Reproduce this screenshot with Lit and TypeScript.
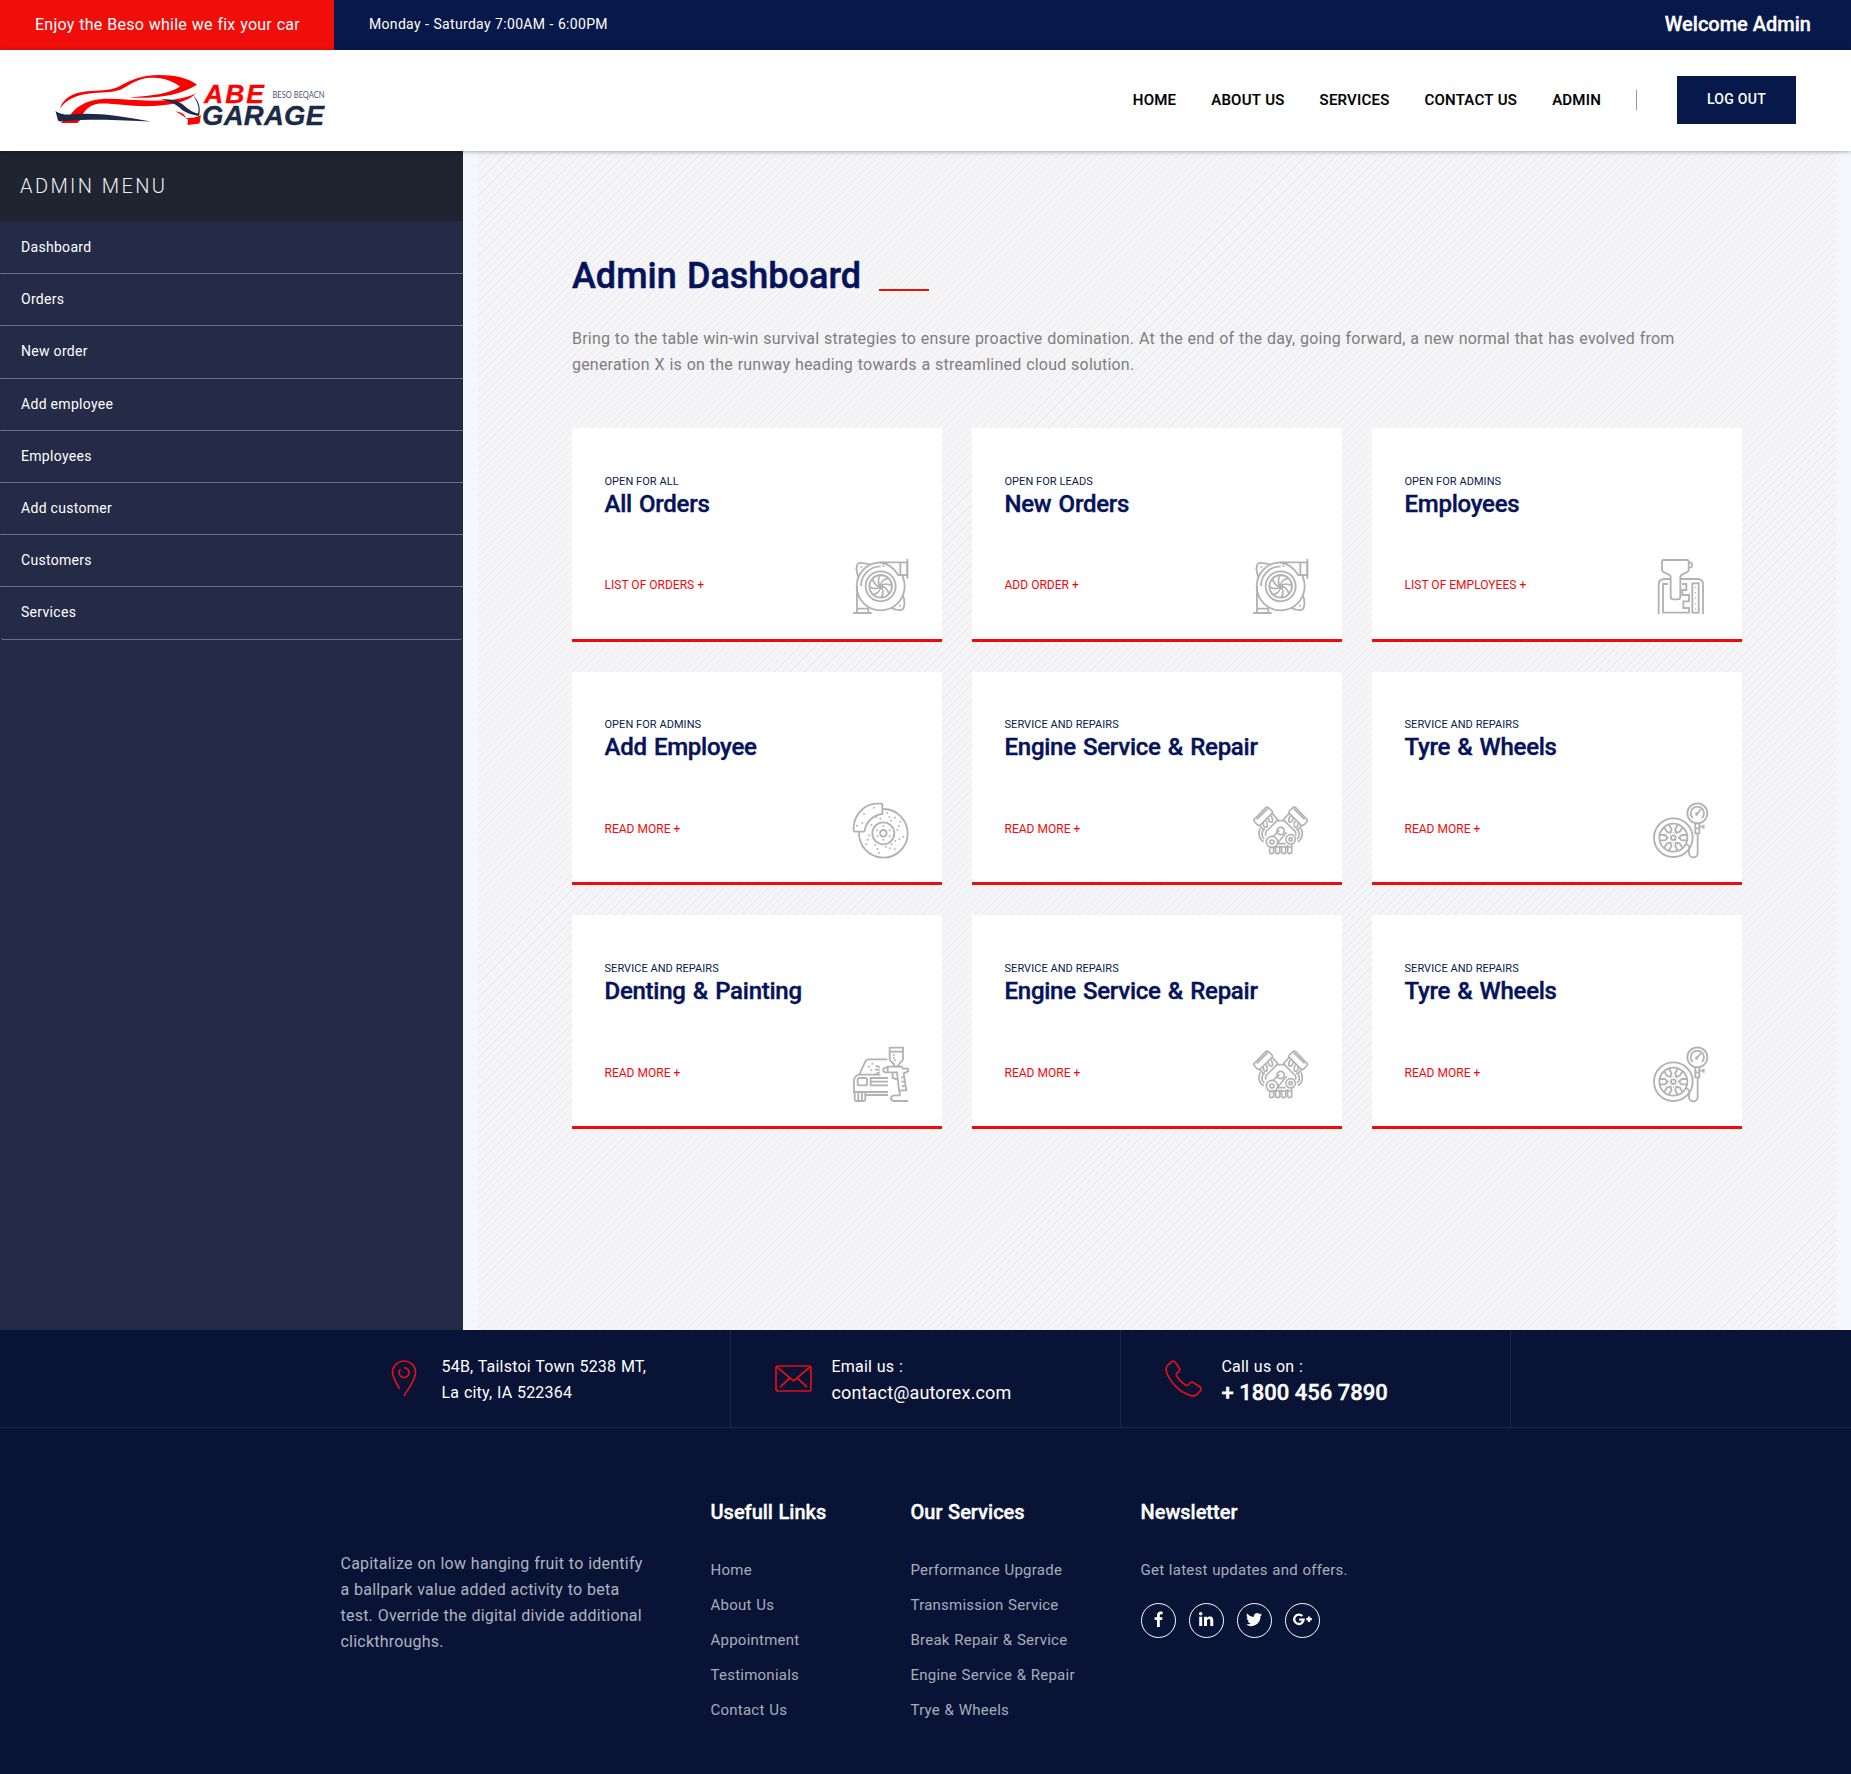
import { LitElement, html, css, svg } from "lit";
import { customElement, property } from "lit/decorators.js";

const dots = (points: number[][], r = 2.9) =>
  points.map(([x, y]) => svg`<circle class="fill" cx=${x} cy=${y} r=${r}></circle>`);

const ICONS: Record<string, unknown> = {
  turbo: svg`
    <circle cx="83" cy="82" r="72"></circle>
    <path class="solid" d="M85 10H163V48H136C124 30 106 13 85 12Z"></path>
    <path d="M163 0V59M142 10V48M24 81A59 59 0 0 1 83 22"></path>
    <circle cx="83" cy="82" r="45"></circle><circle cx="83" cy="82" r="34"></circle>
    ${[0, 45, 90, 135, 180, 225, 270, 315].map(
      (a) => svg`<path d="M83 82C74 74 75 60 81 49" transform="rotate(${a} 83 82)"></path>`
    )}
    <circle class="fill" cx="83" cy="82" r="7"></circle>
    <path d="M16 54C10 38 9 21 15 14C21 9 38 13 52 17"></path>
    <path d="M150 110C157 126 155 147 148 152C139 156 125 151 113 147"></path>
    <path d="M12 82V161M46 144V161M12 149H46M0 162H56"></path>
    ${dots([[25, 24], [141, 140], [91, 21]])}`,
  shifter: svg`
    <path d="M31 3H103Q107 3 107 8V33C107 44 82 42 82 54V113Q82 121 74 121H61Q53 121 53 113V54C53 42 27 44 27 33V8Q27 3 31 3Z"></path>
    <path d="M107 11H112Q117 11 117 16V20Q117 25 112 26H107"></path>
    <path d="M17 165V77Q17 60 34 60H53M82 60H134Q150 60 150 77V165"></path>
    <path d="M45 75H30V161H108V147H91V127H108V108H88V93H100V75H87"></path>
    <rect x="118" y="73" width="19" height="88"></rect>
    ${dots([[127.5, 85], [127.5, 101], [127.5, 117], [127.5, 134], [127.5, 150]], 2.2)}`,
  brake: svg`
    <path d="M90 18A73 73 0 1 1 18 88"></path>
    <path d="M5 86Q2 86 2 82V70C6 32 36 2 72 2H85Q88 2 88 5V33C62 36 39 55 35 83Q34 86 31 86Z"></path>
    <circle cx="91" cy="91" r="33"></circle><circle cx="91" cy="91" r="10"></circle>
    ${dots([[63, 14], [33, 33], [12, 68], [28, 60], [91, 70], [91, 110], [72, 82], [110, 82], [74, 100], [110, 100],
      [103, 30], [109, 42], [126, 44], [114, 53], [142, 56], [138, 69], [133, 81], [151, 101], [139, 108], [127, 114],
      [116, 124], [111, 136], [125, 139], [99, 131], [78, 150], [73, 138], [66, 126], [44, 110], [40, 124], [48, 97],
      [82, 47], [70, 43], [55, 66]])}`,
  engine: svg`
    <g class="thin">
    ${[0, 1].map(
      (m) => svg`<g transform=${m ? "translate(166 0) scale(-1 1)" : ""}>
        <path d="M5 48L38 14Q42 11 46 14L57 24Q60 28 57 31L22 66Q18 69 14 66L5 57Q0 52 5 48Z"></path>
        <path d="M11 49L44 17M20 68L31 79L37 79M58 32L73 48L72 53L83 53"></path>
        <path d="M31 60Q31 77 42 71Q45 61 39 53M46 45Q48 61 58 56Q60 47 54 38"></path>
        <path d="M38 87L72 53M38 87V98M22 76C15 90 17 108 32 116M31 80C25 91 26 101 34 108"></path>
      </g>`
    )}
    <circle cx="83" cy="84" r="11"></circle>
    <path d="M61 99L79 82M72 122L101 88M72 122H98"></path>
    <circle class="solid" cx="57" cy="117" r="17"></circle><circle cx="57" cy="117" r="6"></circle>
    <circle class="solid" cx="113" cy="109" r="14"></circle><circle cx="113" cy="109" r="5"></circle>
    <path d="M50 136V149Q55 155 62 149V130M68 128V149Q74 155 80 149V128M86 128V149Q92 155 98 149V128M104 126V149Q110 155 116 149V124M50 132H116"></path>
    </g>`,
  tyre: svg`
    <circle cx="61" cy="104" r="58"></circle><circle cx="61" cy="104" r="42"></circle><circle cx="61" cy="104" r="7"></circle>
    ${[0, 60, 120, 180, 240, 300].map(
      (a) => svg`<path d="M53 64V79L61 87L69 79V64" transform="rotate(${a + 30} 61 104)"></path>`
    )}
    ${dots([[61, 88], [61, 120], [45, 104], [77, 104]], 2)}
    <circle class="solid" cx="133" cy="31" r="30"></circle>
    <path d="M119 45A20 20 0 1 1 147 45M131 33L144 19"></path>
    <circle class="fill" cx="131" cy="33" r="5"></circle>
    <path class="solid" d="M127 61H139V91H127ZM127 76H139M141 71H152M152 65V77"></path>
    <path d="M134 91V150A13 13 0 0 1 108 150V142C111 132 108 124 96 124"></path>`,
  paint: svg`
    <path d="M103 37H47Q40 37 37 43L20 81M16 83H82M20 82Q3 86 3 103V135H105"></path>
    <rect x="14" y="93" width="28" height="22" rx="5"></rect>
    <path d="M105 93H53V115H105M53 104H105"></path>
    <path d="M5 137V156Q5 162 11 162H31Q37 162 37 156V137M16 138V162M27 138V162M37 144H105"></path>
    <path d="M110 2H150V35Q150 42 143 46Q137 50 137 58H124Q124 50 117 46Q110 42 110 35ZM110 14H150"></path>
    <path d="M104 59H146L150 65H165V73L152 79L160 130H138L132 76H104Z"></path>
    <path d="M104 62H96L91 65V73L96 76H104M119 77V93L132 97M144 91H151M145 104H153M147 117H155"></path>
    <path d="M140 131V145H124Q114 146 114 154Q114 162 123 162H166"></path>
    <path d="M66 68H80M68 56L80 61M68 81L80 75"></path>
    ${dots([[48, 59], [58, 50], [55, 70], [122, 24], [122, 33], [126, 40]], 3)}`,
};

const SOCIAL: Record<string, unknown> = {
  facebook: svg`<path d="M9.8 16V9h2.3l.4-2.7H9.8V4.6c0-.8.3-1.4 1.4-1.4h1.4V.8C12.300.7 11.500.6 10.600.6 8.500.6 7 1.900 7 4.300v2H4.600V9H7v7z"></path>`,
  linkedin: svg`<path d="M1.200 5.700h3V15h-3zM2.700 1a1.750 1.750 0 1 1 0 3.500 1.750 1.750 0 0 1 0-3.500zM6 5.700h2.900V7c.5-.9 1.500-1.600 2.900-1.600 3 0 3.500 2 3.500 4.500V15h-3v-4.600c0-1.200 0-2.500-1.500-2.500S9 9.100 9 10.300V15H6z"></path>`,
  twitter: svg`<path d="M16 3.500c-.6.300-1.200.4-1.900.5.700-.4 1.200-1 1.400-1.800-.6.400-1.300.6-2.100.8a3.300 3.300 0 0 0-5.600 3C5.100 5.900 2.700 4.600 1.100 2.600c-.9 1.500-.4 3.400 1 4.400-.5 0-1-.2-1.500-.4 0 1.500 1.100 2.900 2.600 3.200-.5.100-1 .2-1.500.1.400 1.300 1.600 2.200 3.100 2.300A6.600 6.600 0 0 1 0 13.500 9.300 9.300 0 0 0 14.400 5.200c.6-.4 1.200-1 1.600-1.700z"></path>`,
  google: svg`<path class="ring" d="M8.300 5A4.700 4.700 0 1 0 9.600 8.700H5.200M12.300 8.200h5.500M15 5.400v5.500"></path>`,
};

@customElement("service-card")
class ServiceCard extends LitElement {
  @property() kicker = "";
  @property() heading = "";
  @property() link = "";
  @property() icon = "";
  static styles = css`
    :host { display: block; height: 213.6px; box-sizing: border-box; background: #fff; border-bottom: 3px solid #f5080a; padding: 45.400px 34px 0 32.5px; }
    .kicker { font-size: 11px; line-height: 16px; color: #08194a; white-space: nowrap; letter-spacing: .05px; }
    .heading { margin: 0; font-size: 24px; line-height: 29px; font-weight: 500; color: #06135a; white-space: nowrap; letter-spacing: -.26px; word-spacing: 1.500px; -webkit-text-stroke: 0.4px #06135a; }
    .foot { display: flex; justify-content: space-between; margin-top: 40.800px; }
    .link { font-size: 12px; line-height: 16px; color: #f5080a; margin-top: 18px; white-space: nowrap; letter-spacing: .02px; }
    svg { width: 55px; height: 55px; overflow: visible; }
    svg * { fill: none; stroke: #b2b2b2; stroke-width: 5.500; }
    svg .thin * { stroke-width: 5; }
    svg .fill { fill: #b2b2b2; stroke: none; }
    svg .solid { fill: #fff; }
  `;
  render() {
    return html`<div class="kicker">${this.kicker}</div>
      <h2 class="heading">${this.heading}</h2>
      <div class="foot">
        <a class="link">${this.link} +</a>
        <svg viewBox="0 0 165 165">${ICONS[this.icon]}</svg>
      </div>`;
  }
}

const MENU = ["Dashboard", "Orders", "New order", "Add employee", "Employees", "Add customer", "Customers", "Services"];
const CARDS = [
  ["OPEN FOR ALL", "All Orders", "LIST OF ORDERS", "turbo"],
  ["OPEN FOR LEADS", "New Orders", "ADD ORDER", "turbo"],
  ["OPEN FOR ADMINS", "Employees", "LIST OF EMPLOYEES", "shifter"],
  ["OPEN FOR ADMINS", "Add Employee", "READ MORE", "brake"],
  ["SERVICE AND REPAIRS", "Engine Service & Repair", "READ MORE", "engine"],
  ["SERVICE AND REPAIRS", "Tyre & Wheels", "READ MORE", "tyre"],
  ["SERVICE AND REPAIRS", "Denting & Painting", "READ MORE", "paint"],
  ["SERVICE AND REPAIRS", "Engine Service & Repair", "READ MORE", "engine"],
  ["SERVICE AND REPAIRS", "Tyre & Wheels", "READ MORE", "tyre"],
];

@customElement("app-root")
class AppRoot extends LitElement {
  static styles = css`
    :host { display: block; width: 1851px; height: 1774px; overflow: hidden; font-family: Roboto, "Liberation Sans", sans-serif; font-size: 16px; line-height: 26px; }
    * { box-sizing: border-box; }
    .topbar { display: flex; height: 50px; background: #07184a; color: #fff; line-height: 49px; white-space: nowrap; }
    .slogan { width: 334px; background: #f10d0a; padding-left: 35px; letter-spacing: .24px; word-spacing: .5px; }
    .hours { padding-left: 35px; font-size: 14px; line-height: 48px; flex: 1; letter-spacing: .32px; word-spacing: .4px; }
    .welcome { padding-right: 40px; font-size: 20px; font-weight: 500; -webkit-text-stroke: .3px #fff; }
    .header { display: flex; height: 101px; padding: 24px 55px 0; background: #fff; align-items: flex-start; position: relative; z-index: 1; box-shadow: 0 1px 4px rgba(0,0,0,.3); }
    .logo { width: 272px; height: 52px; flex: none; margin-right: auto; overflow: visible; }
    .red { fill: #fe0000; }
    .navy { fill: #1c2947; }
    .abe { font: italic bold 26.500px "Liberation Sans", sans-serif; stroke: #fe0000; stroke-width: .3; }
    .garage { font: italic bold 27.500px "Liberation Sans", sans-serif; stroke: #1c2947; stroke-width: .3; }
    .tag { font: 400 8.500px Lato, sans-serif; fill: #4a5573; }
    nav { display: flex; gap: 35px; font-size: 15px; font-weight: 500; line-height: 52px; color: #000; white-space: nowrap; letter-spacing: .22px; word-spacing: .6px; -webkit-text-stroke: .15px #000; }
    .sep { width: 1px; height: 20px; background: #999; margin: 16px 40px 0 35px; }
    .logout { width: 119px; height: 48px; margin-top: 2px; background: #07184a; color: #fff; font-size: 14px; font-weight: 500; text-align: center; line-height: 47px; letter-spacing: .3px; }
    .body { display: flex; height: 1179px; }
    .sidebar { width: 463px; background: #242b47; color: #fff; }
    .sidebar h2 { margin: 0; height: 70px; background: #1e2430; font-size: 20px; line-height: 71px; font-weight: 300; letter-spacing: 2.400px; padding-left: 20px; color: #eee; }
    .menu { border: 1px solid #212643; border-radius: 4px; border-bottom-color: #6b7080; }
    .menu a { display: block; height: 52.200px; border-bottom: 1px solid #6b7080; font-size: 14px; line-height: 50.500px; letter-spacing: .3px; margin: 0 -1px; padding-left: 21px; }
    .menu a:last-child { border-bottom: 0; height: 51.400px; }
    .main { flex: 1; background: #f5f7fc; padding: 0 15px; }
    .pattern { height: 100%; padding: 104px 94px 0; background: repeating-linear-gradient(135deg, #e9ebed 0 0.700px, #f5f5f8 0.900px 5.300px); }
    .title { display: flex; align-items: flex-end; height: 41px; }
    h1 { margin: 0; font-size: 36px; line-height: 41px; font-weight: 500; color: #06135a; white-space: nowrap; word-spacing: 1.200px; -webkit-text-stroke: .5px #06135a; position: relative; top: 1px; }
    .dash { width: 50px; height: 2px; background: #ef0d0a; margin: 0 0 5px 18px; }
    .lead { margin: 30px 0 0; color: #7e7e7e; white-space: nowrap; letter-spacing: .2px; word-spacing: .58px; }
    .cards { display: grid; grid-template-columns: repeat(3, 370px); gap: 30px; margin-top: 50.300px; }
    .footer { height: 444px; background: #081336; color: #fff; }
    .contact { height: 98px; padding-left: 340px; border-bottom: 1px solid #1e2849; display: flex; }
    .info { width: 390.500px; border-right: 1px solid #1b2546; display: flex; padding-top: 24px; white-space: nowrap; letter-spacing: .2px; word-spacing: .5px; }
    .info + .info { width: 390px; }
    .info svg { width: 37px; height: 37px; margin: 6px 20px 0 44.500px; fill: none; stroke: #e01015; stroke-width: 1.700; flex: none; overflow: visible; }
    .info + .info svg { margin-left: 44px; }
    .mail { font-size: 18px; letter-spacing: .15px; }
    .phone { font-size: 22px; font-weight: 500; letter-spacing: 0; word-spacing: 0; -webkit-text-stroke: .4px #fff; }
    .cols { display: flex; padding: 72px 0 0 340.500px; }
    .about { width: 370px; padding-top: 51px; color: #b0b3bf; white-space: nowrap; letter-spacing: .22px; word-spacing: .5px; }
    .cols h3 { margin: 0; font-size: 20px; line-height: 24px; font-weight: 500; white-space: nowrap; word-spacing: .6px; -webkit-text-stroke: .35px #fff; }
    .list { color: #a9adba; font-size: 15px; line-height: 35px; padding-top: 29px; white-space: nowrap; letter-spacing: .24px; word-spacing: .6px; }
    .links { width: 200px; }
    .services { width: 230px; }
    .social { display: flex; gap: 13px; margin-top: 15px; }
    .circle { width: 35px; height: 35px; border: 1px solid #fff; border-radius: 50%; display: grid; place-items: center; }
    .circle svg { width: 16px; height: 16px; fill: #fff; overflow: visible; margin-bottom: 3px; }
    .circle .ring { fill: none; stroke: #fff; stroke-width: 2.300; }
  `;
  render() {
    return html`
      <div class="topbar">
        <div class="slogan"><span>Enjoy the Beso while we fix your car</span></div>
        <div class="hours">Monday - Saturday 7:00AM - 6:00PM</div>
        <div class="welcome">Welcome Admin</div>
      </div>
      <div class="header">
        <svg class="logo" viewBox="0 0 272 52">
          <path class="red" d="M5 34.500C8 24 18 19 30 17.500C44 16 54 17 63 13C77 5 88 1 104 1C120 1 133 4 142 10.700C126 21 102 25 74 23.500C98 22 116 19 125 12.500C115 5 105 3.700 96 3.700C83 4 76 10 66 15.500C56 19 46 18 35 19.500C20 21 11 26 5 34.500Z"></path>
          <path class="red" d="M6 49H22.500L26 45H16L14.500 42C20 34 30 26 47 25C62 24 80 27 100 26.700C116 26.500 130 25 141 19.300C133 28 118 31 98 32C75 33 60 29 45 29.500C35 30 28 37 26 45L10 45Z"></path>
          <path class="navy" d="M.5 37C5 40 10 41 16 40.500C40 38 66 42 96 47.500C70 47 45 44 5 47.500L3 46.500Z"></path>
          <path class="navy" d="M106 25.500C119 24 127 29 132 34C137 38 140 39 143 39.500C145 34 142 27 138 21C144 27 146 34 144 42C134 40 129 38 125 34C119 29 114 27 106 25.500Z"></path>
          <path class="red" d="M120.500 37.500C127 38 129 40 131 44C135 44 141 44 146 41L144.500 49.500L132.500 51L133 45.500C128 42 126 40 120.500 37.500Z"></path>
          <text class="red abe" x="149" y="29" textLength="60" lengthAdjust="spacing">ABE</text>
          <text class="navy garage" x="147" y="50.500" textLength="122" lengthAdjust="spacing">GARAGE</text>
          <text class="tag" x="217.500" y="23.700" textLength="52" lengthAdjust="spacingAndGlyphs">BESO BEQACN</text>
        </svg>
        <nav><a>HOME</a><a>ABOUT US</a><a>SERVICES</a><a>CONTACT US</a><a>ADMIN</a></nav>
        <div class="sep"></div>
        <div class="logout">LOG OUT</div>
      </div>
      <div class="body">
        <div class="sidebar">
          <h2>ADMIN MENU</h2>
          <div class="menu">${MENU.map((m) => html`<a>${m}</a>`)}</div>
        </div>
        <div class="main"><div class="pattern">
          <div class="title"><h1>Admin Dashboard</h1><div class="dash"></div></div>
          <p class="lead">Bring to the table win-win survival strategies to ensure proactive domination. At the end of the day, going forward, a new normal that has evolved from<br>generation X is on the runway heading towards a streamlined cloud solution.</p>
          <div class="cards">
            ${CARDS.map(([k, h, l, i]) => html`<service-card kicker=${k} heading=${h} link=${l} icon=${i}></service-card>`)}
          </div>
        </div></div>
      </div>
      <div class="footer">
        <div class="contact">
          <div class="info">
            <svg viewBox="0 0 37 37"><path d="M14.500 29C11 23 7.500 17 7.500 12.500A11.500 11.500 0 0 1 30.500 12.500C30.500 20 23 29 19 36M15.500 9A5 5 0 1 0 22 8.500L19 7.500"></path></svg>
            <div><div>54B, Tailstoi Town 5238 MT,</div><div>La city, IA 522364</div></div>
          </div>
          <div class="info">
            <svg viewBox="0 0 37 37"><rect x="1" y="6" width="35" height="25" rx="2"></rect><path d="M2 7L18.500 21L35 7M5 27L15 18M32 27L22 18"></path></svg>
            <div><div>Email us :</div><div class="mail">contact@autorex.com</div></div>
          </div>
          <div class="info">
            <svg viewBox="0 0 37 37"><path d="M3 5L7 1.500Q9 .5 10.500 2.500L14.500 8.500Q15.500 10.500 13.500 12L11.500 13.500Q11 14.500 12 16.500C14 20 17 23 20.500 25Q22 26 23.500 24.500L25.500 22.500Q27 21.500 29 23L35 27Q37 28.500 35.500 30.500L32 34.500Q29 37 24 35C14 31.500 5 22 1.500 12Q0 8 3 5Z"></path></svg>
            <div><div>Call us on :</div><div class="phone">+ 1800 456 7890</div></div>
          </div>
        </div>
        <div class="cols">
          <div class="about">Capitalize on low hanging fruit to identify<br>a ballpark value added activity to beta<br>test. Override the digital divide additional<br>clickthroughs.</div>
          <div class="links"><h3>Usefull Links</h3><div class="list">${["Home", "About Us", "Appointment", "Testimonials", "Contact Us"].map((t) => html`<div>${t}</div>`)}</div></div>
          <div class="services"><h3>Our Services</h3><div class="list">${["Performance Upgrade", "Transmission Service", "Break Repair & Service", "Engine Service & Repair", "Trye & Wheels"].map((t) => html`<div>${t}</div>`)}</div></div>
          <div class="news"><h3>Newsletter</h3><div class="list">Get latest updates and offers.</div>
            <div class="social">${["facebook", "linkedin", "twitter", "google"].map((s) => html`<div class="circle"><svg viewBox="0 0 16 16">${SOCIAL[s]}</svg></div>`)}</div>
          </div>
        </div>
      </div>`;
  }
}
